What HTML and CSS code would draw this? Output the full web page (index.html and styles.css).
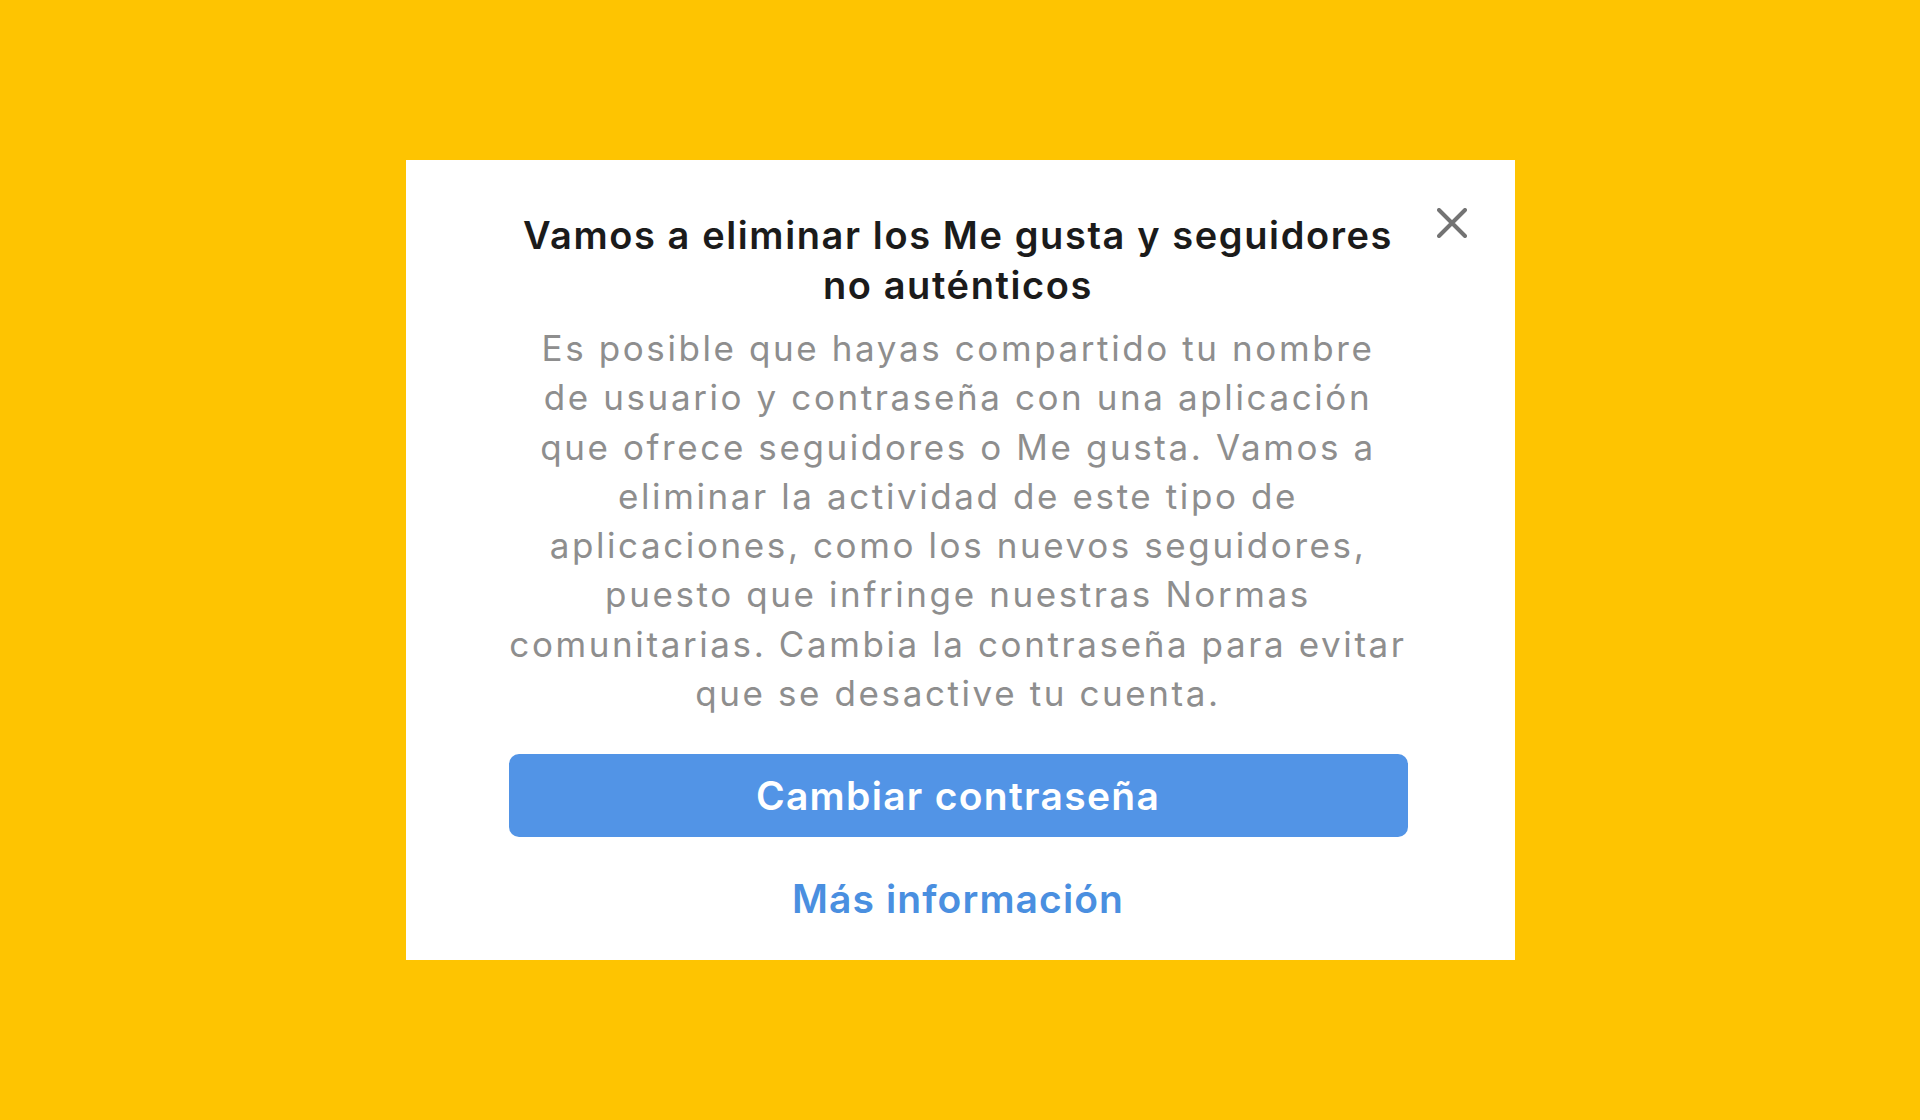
FILE: index.html
```html
<!DOCTYPE html>
<html lang="es">
<head>
    <meta charset="UTF-8" />
    <meta name="viewport" content="width=device-width, initial-scale=1" />
    <title>Me gusta y seguidores no auténticos</title>
    <link rel="stylesheet" href="styles.css">
</head>
<body>
    <div class="dialog">
        <button class="close" type="button" aria-label="Cerrar">
            <svg width="30" height="30" viewBox="0 0 30 30">
                <path d="M2 2 L28 28 M28 2 L2 28" stroke="#737373" stroke-width="4" stroke-linecap="round" />
            </svg>
        </button>

        <h1 class="title">Vamos a eliminar los Me gusta y seguidores<br>no auténticos</h1>

        <p class="text">
            Es posible que hayas compartido tu nombre<br>
            de usuario y contraseña con una aplicación<br>
            que ofrece seguidores o Me gusta. Vamos a<br>
            eliminar la actividad de este tipo de<br>
            aplicaciones, como los nuevos seguidores,<br>
            puesto que infringe nuestras Normas<br>
            comunitarias. Cambia la contraseña para evitar<br>
            que se desactive tu cuenta.
        </p>

        <button class="primary" type="button">Cambiar contraseña</button>
        <a class="more" href="#">Más información</a>
    </div>
</body>
</html>
```

FILE: styles.css
```css
* {
    box-sizing: border-box;
}

body {
    margin: 0;
    padding: 0;
    height: 100vh;
    display: flex;
    justify-content: center;
    align-items: center;
    background-color: #fec401;
    font-family: Inter, "Noto Sans", sans-serif;
}

.dialog {
    position: relative;
    width: 1109px;
    height: 800px;
    background-color: #fff;
    padding: 50px 107px 0 103px;
    display: flex;
    flex-direction: column;
    align-items: center;
}

.close {
    position: absolute;
    top: 48px;
    right: 48px;
    width: 30px;
    height: 30px;
    padding: 0;
    border: none;
    background: none;
    cursor: pointer;
}

.close svg {
    display: block;
}

.title {
    margin: 0;
    font-size: 38px;
    line-height: 50px;
    font-weight: 600;
    letter-spacing: 1.6px;
    color: #1b1b1b;
    text-align: center;
    white-space: nowrap;
}

.text {
    margin: 14px 0 0;
    font-size: 35px;
    line-height: 49.3px;
    font-weight: 400;
    letter-spacing: 2.6px;
    color: #8e8e8e;
    text-align: center;
    white-space: nowrap;
}

.primary {
    width: 100%;
    height: 83px;
    margin-top: 36px;
    background-color: #5294e6;
    color: #fff;
    font-family: inherit;
    font-size: 39px;
    font-weight: 600;
    letter-spacing: 1.3px;
    border: none;
    border-radius: 10px;
    cursor: pointer;
}

.more {
    margin-top: 40px;
    color: #4a8fe0;
    font-size: 39px;
    line-height: 44px;
    font-weight: 600;
    letter-spacing: 1.1px;
    text-decoration: none;
}
```
